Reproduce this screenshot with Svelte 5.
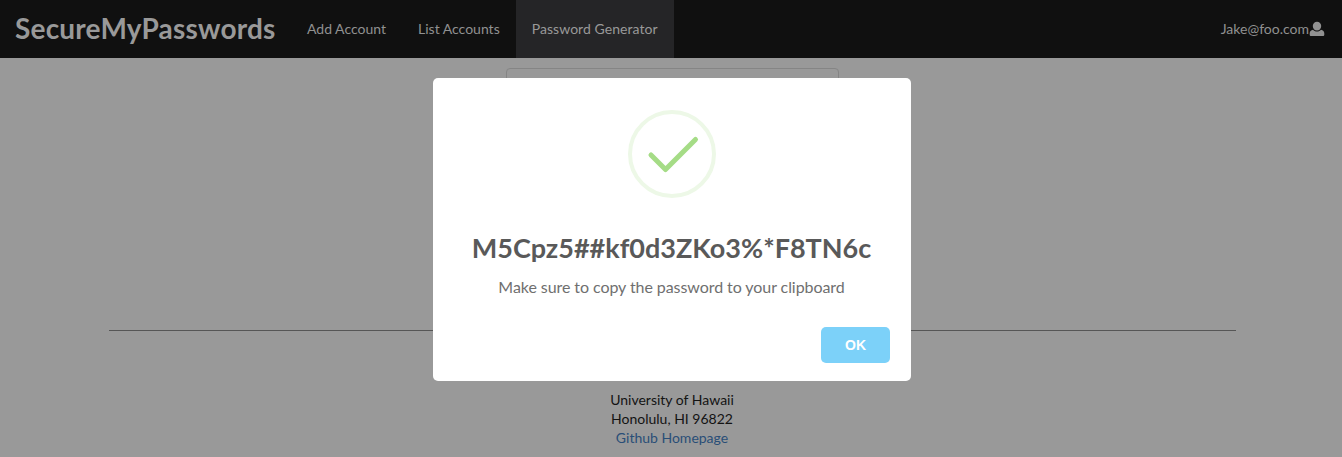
<script>
  const links = ['Add Account', 'List Accounts', 'Password Generator'];
  const active = 'Password Generator';
</script>

<div class="page">
  <nav>
    <h1>SecureMyPasswords</h1>
    {#each links as link}
      <a class="item" class:active={link === active} href="#top">{link}</a>
    {/each}
    <div class="user">
      <span>Jake@foo.com</span>
      <svg width="16" height="16" viewBox="0 0 16 16" aria-hidden="true">
        <path d="M8 .8a4.200 4.200 0 0 1 4.200 4.300c0 2.500-1.700 4.500-4.200 4.500S3.800 7.600 3.800 5.100A4.200 4.200 0 0 1 8 .8ZM4 8.800c1 1.200 2.400 1.800 4 1.800s3-.6 4-1.800c2 .4 3.300 1.800 3.300 3.600v1.300c0 .8-.6 1.300-1.400 1.300H2.100c-.8 0-1.400-.5-1.400-1.300v-1.300c0-1.800 1.300-3.200 3.300-3.600Z" />
      </svg>
    </div>
  </nav>
  <main><div class="panel"></div></main>
  <footer>
    <hr />
    <div>University of Hawaii</div>
    <div>Honolulu, HI 96822</div>
    <a href="#top">Github Homepage</a>
  </footer>
</div>

<div class="overlay">
  <div class="modal" role="dialog" aria-modal="true">
    <svg class="check" width="88" height="88" viewBox="0 0 88 88" fill="none" aria-hidden="true">
      <circle cx="44" cy="44" r="42" stroke="#edf8e7" stroke-width="4" />
      <path d="M23 45 37.500 59.500M37.500 59.500 67.500 29.500" stroke="#a5dc86" stroke-width="5" stroke-linecap="round" />
    </svg>
    <h2>M5Cpz5##kf0d3ZKo3%*F8TN6c</h2>
    <p>Make sure to copy the password to your clipboard</p>
    <div class="actions"><button>OK</button></div>
  </div>
</div>

<style>
  :global(body) {
    margin: 0;
    overflow: hidden;
    background: #999;
  }
  .page, .overlay {
    box-sizing: border-box;
    width: 100%;
    height: 457px;
    font-family: Lato, sans-serif;
  }
  .page {
    display: flex;
    flex-direction: column;
    background: #999;
    font-size: 14px;
    line-height: 19px;
    color: #131313;
  }
  nav {
    display: flex;
    align-items: center;
    height: 58px;
    flex: none;
    background: #101010;
    color: #999;
  }
  h1 {
    margin: 0 16px 0 15px;
    width: 260px;
    font-size: 28px;
    line-height: 36px;
    font-weight: 700;
    letter-spacing: 0.2px;
    white-space: nowrap;
    padding-bottom: 2px;
  }
  .item {
    box-sizing: border-box;
    display: flex;
    align-items: center;
    height: 100%;
    padding: 0 16px 2px;
    color: #919191;
    text-decoration: none;
  }
  .active {
    width: 158px;
    letter-spacing: 0.05px;
    background: #252527;
    color: #999;
  }
  .user {
    display: flex;
    align-items: center;
    margin-left: auto;
    padding-right: 17px;
    color: #919191;
  }
  .user span { padding-bottom: 2px; }
  .user svg { fill: #919191; }
  main {
    flex: none;
    height: 262px;
    padding: 10px 0 0 2px;
    display: flex;
    justify-content: center;
  }
  .panel {
    box-sizing: border-box;
    width: 333px;
    height: 230px;
    border: 1px solid #858585;
    border-radius: 4px;
  }
  footer {
    padding-left: 2px;
    text-align: center;
  }
  hr {
    width: 1127px;
    height: 1px;
    border: 0;
    margin: 0 auto 59px;
    background: #565656;
  }
  footer a {
    color: #294e77;
    text-decoration: none;
  }
  .overlay {
    position: absolute;
    top: 0;
    left: 0;
    display: flex;
    justify-content: center;
    align-items: flex-start;
    padding: 78px 0 0 2px;
  }
  .modal {
    box-sizing: border-box;
    width: 478px;
    height: 303px;
    border-radius: 5px;
    background: #fff;
    display: flex;
    flex-direction: column;
    align-items: center;
    padding: 32px 21px 18px 20px;
  }
  .check { flex: none; }
  h2 {
    margin: 32px 0 0;
    font-size: 27px;
    line-height: 36px;
    font-weight: 700;
    color: #595959;
    white-space: nowrap;
  }
  p {
    margin: 11px 0 0;
    font-size: 16px;
    line-height: 20px;
    letter-spacing: -0.07px;
    color: #6f6f6f;
  }
  .actions {
    width: 100%;
    display: flex;
    justify-content: flex-end;
    margin-top: 30px;
  }
  button {
    width: 69px;
    height: 36px;
    padding: 0;
    border: 0;
    border-radius: 5px;
    background: #7cd1f9;
    color: #fff;
    font: 700 14px "Liberation Sans", Arial, sans-serif;
  }
</style>
